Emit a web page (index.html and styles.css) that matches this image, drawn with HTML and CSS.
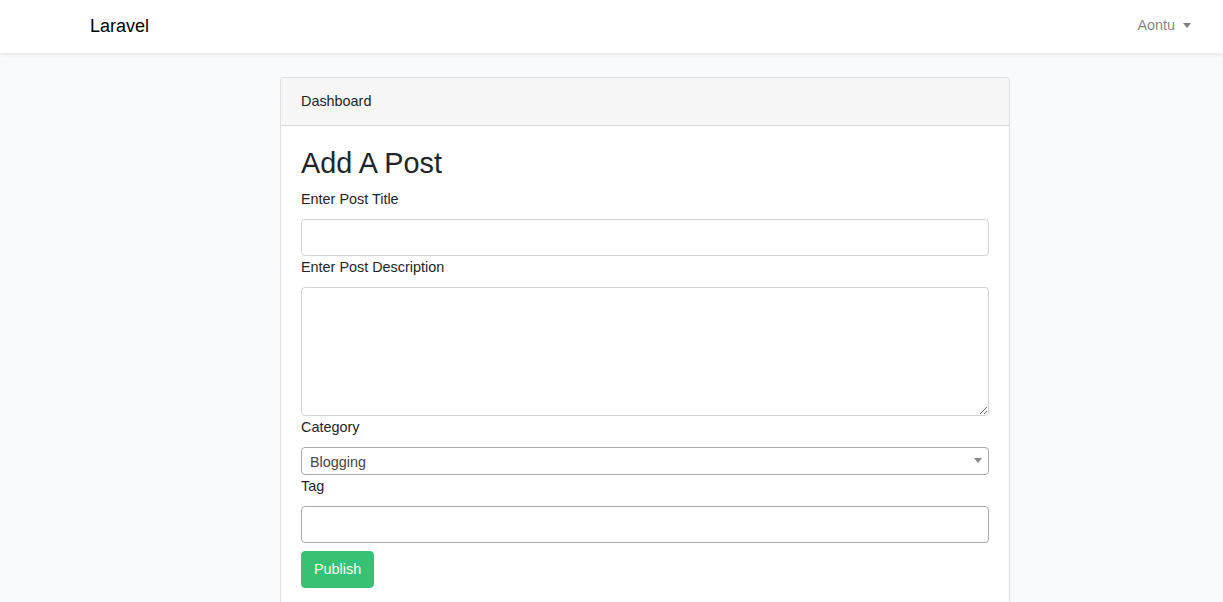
FILE: index.html
```html
<!DOCTYPE html>
<html lang="en">
<head>
<meta charset="utf-8">
<title>Laravel</title>
<link rel="stylesheet" href="styles.css">
</head>
<body>
<nav class="navbar">
  <a class="brand" href="#">Laravel</a>
  <a class="user" href="#">Aontu <span class="caret"></span></a>
</nav>
<main class="main">
  <div class="card">
    <div class="card-header">Dashboard</div>
    <div class="card-body">
      <h2 class="title">Add A Post</h2>
      <form class="form">
        <label class="label">Enter Post Title</label>
        <input class="input" type="text">
        <label class="label">Enter Post Description</label>
        <textarea class="textarea"></textarea>
        <label class="label">Category</label>
        <div class="select">
          <span class="select-text">Blogging</span>
          <span class="select-arrow"></span>
        </div>
        <label class="label">Tag</label>
        <input class="input input-dark" type="text">
        <div class="actions"><button class="btn" type="button">Publish</button></div>
      </form>
    </div>
  </div>
</main>
</body>
</html>
```
FILE: styles.css
```css
* { box-sizing: border-box; }
html, body { margin: 0; height: 100%; }
body {
  background: #f8fafc;
  font-family: "Liberation Sans", Arial, sans-serif;
  font-size: 14.4px;
  line-height: 1.6;
  color: #212529;
  overflow: hidden;
}
.navbar {
  height: 53px;
  background: #fff;
  box-shadow: 0 .125rem .25rem rgba(0,0,0,.075);
  display: flex;
  align-items: center;
  justify-content: space-between;
  padding: 0 32px 0 90px;
}
.brand {
  font-size: 18px;
  color: #000;
  text-decoration: none;
}
.user {
  color: rgba(0,0,0,.5);
  text-decoration: none;
  font-size: 14.4px;
  display: flex;
  align-items: center;
  margin-top: -2px;
}
.caret {
  display: inline-block;
  margin-left: 8px;
  border-top: 5px solid rgba(0,0,0,.5);
  border-left: 4px solid transparent;
  border-right: 4px solid transparent;
  width: 0;
  height: 0;
}
.main {
  padding: 24px 0 0 280px;
}
.card {
  width: 730px;
  background: #fff;
  border: 1px solid rgba(0,0,0,.125);
  border-radius: 4px;
}
.card-header {
  padding: 12px 20px;
  background: #f7f7f7;
  border-bottom: 1px solid rgba(0,0,0,.125);
  border-radius: 3px 3px 0 0;
}
.card-body {
  padding: 20px;
}
.title {
  font-size: 28.8px;
  font-weight: 400;
  line-height: 1.2;
  margin: 0 0 7.2px;
}
.form {
  display: flex;
  flex-direction: column;
}
.label {
  margin-bottom: 8px;
}
.input, .textarea {
  display: block;
  width: 100%;
  height: 37px;
  border: 1px solid #ced4da;
  border-radius: 4px;
  background: #fff;
  font: inherit;
  padding: 6px 12px;
}
.input-dark { border-color: #a9a9a9; }
.textarea {
  height: 129px;
  resize: vertical;
}
.select {
  height: 28px;
  border: 1px solid #aaa;
  border-radius: 4px;
  display: flex;
  align-items: center;
  justify-content: space-between;
  padding: 0 6px 0 8px;
  color: #444;
}
.select-text { line-height: 28px; margin-top: 2px; }
.select-arrow {
  width: 0; height: 0;
  border-top: 5px solid #888;
  border-left: 4px solid transparent;
  border-right: 4px solid transparent;
}
.actions { margin-top: 8px; }
.btn {
  background: #38c172;
  color: #fff;
  border: 1px solid #38c172;
  border-radius: 4px;
  font: inherit;
  height: 37px;
  padding: 0 12px;
  width: 73px;
}
```
